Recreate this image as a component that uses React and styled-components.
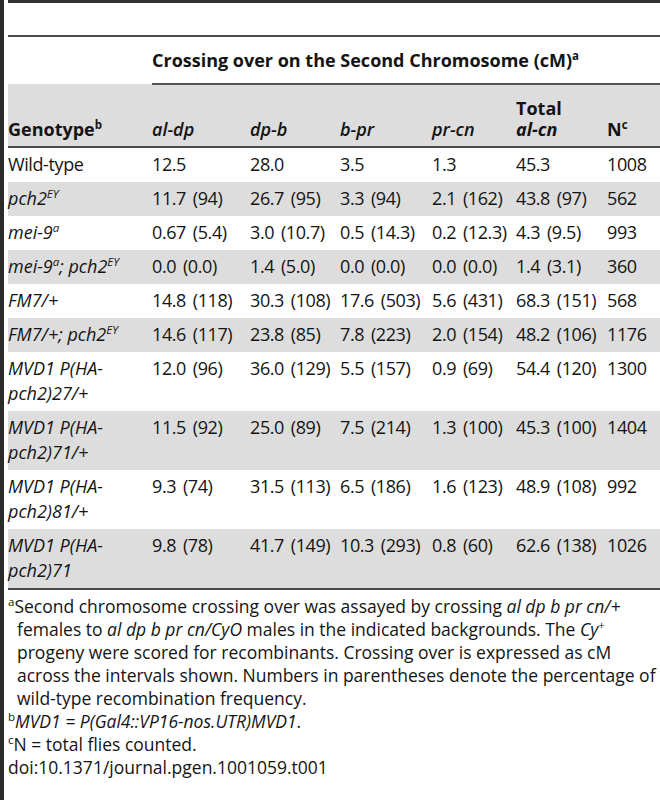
import React from "react";
import styled, { createGlobalStyle } from "styled-components";

const Global = createGlobalStyle`
  html, body { margin: 0; padding: 0; background: #fff; }
  body { font-family: "Open Sans", "Liberation Sans", sans-serif; color: #141414; }
`;

const Page = styled.div`
  width: 660px;
  height: 800px;
  box-sizing: border-box;
  border-left: 4px solid #2a2a2a;
  padding-left: 4px;
  overflow: hidden;
`;

const Frame = styled.div`
  border-top: 3px solid #333;
  padding-top: 32px;
`;

const Table = styled.table`
  width: 652px;
  table-layout: fixed;
  border-collapse: collapse;
  border-top: 2px solid #4a4a4a;
  border-bottom: 2px solid #4a4a4a;
  font-size: 18px;
`;

const SpanHead = styled.th`
  text-align: left;
  font-weight: 700;
  height: 46px;
  padding: 0;
  vertical-align: middle;
  border-bottom: 2px solid #555;
`;

const HeadRow = styled.tr`
  background: #dddddd;
  border-bottom: 2px solid #4a4a4a;
`;

const HeadCell = styled.th`
  text-align: left;
  vertical-align: bottom;
  padding: 0 0 6px 0;
  height: 55px;
  line-height: 21px;
  font-weight: ${(p) => (p.$italic ? 600 : 700)};
  font-style: ${(p) => (p.$italic ? "italic" : "normal")};
`;

const Row = styled.tr`
  background: ${(p) => (p.$shade ? "#dddddd" : "#fff")};
`;

const Cell = styled.td`
  padding: 4px 0 5px 0;
  line-height: 25px;
  vertical-align: top;
  white-space: nowrap;
  font-style: ${(p) => (p.$italic ? "italic" : "normal")};
  letter-spacing: ${(p) => (p.$italic ? "0" : "-0.4px")};
  word-spacing: ${(p) => (p.$italic ? "0" : "2.5px")};
`;

const Sup = styled.sup`
  font-size: 11.5px;
  line-height: 0;
  vertical-align: 7px;
  word-spacing: 0;
  letter-spacing: 0;
`;

const Notes = styled.div`
  padding-top: 5px;
  font-size: 17.5px;
  line-height: 23px;
  white-space: nowrap;
`;

const Note = styled.p`
  margin: 0;
  padding-left: ${(p) => p.$indent}px;
  text-indent: -${(p) => p.$indent}px;
`;

const I = styled.i`
  font-style: italic;
`;

const cols = [144, 98, 90, 92, 84, 91, 53];

const rows = [
  [<>Wild-type</>, false, "12.5", "28.0", "3.5", "1.3", "45.3", "1008"],
  [<>pch2<Sup>EY</Sup></>, true, "11.7 (94)", "26.7 (95)", "3.3 (94)", "2.1 (162)", "43.8 (97)", "562"],
  [<>mei-9<Sup>a</Sup></>, true, "0.67 (5.4)", "3.0 (10.7)", "0.5 (14.3)", "0.2 (12.3)", "4.3 (9.5)", "993"],
  [<>mei-9<Sup>a</Sup>; pch2<Sup>EY</Sup></>, true, "0.0 (0.0)", "1.4 (5.0)", "0.0 (0.0)", "0.0 (0.0)", "1.4 (3.1)", "360"],
  [<>FM7/+</>, true, "14.8 (118)", "30.3 (108)", "17.6 (503)", "5.6 (431)", "68.3 (151)", "568"],
  [<>FM7/+; pch2<Sup>EY</Sup></>, true, "14.6 (117)", "23.8 (85)", "7.8 (223)", "2.0 (154)", "48.2 (106)", "1176"],
  [<>MVD1 P(HA-<br />pch2)27/+</>, true, "12.0 (96)", "36.0 (129)", "5.5 (157)", "0.9 (69)", "54.4 (120)", "1300"],
  [<>MVD1 P(HA-<br />pch2)71/+</>, true, "11.5 (92)", "25.0 (89)", "7.5 (214)", "1.3 (100)", "45.3 (100)", "1404"],
  [<>MVD1 P(HA-<br />pch2)81/+</>, true, "9.3 (74)", "31.5 (113)", "6.5 (186)", "1.6 (123)", "48.9 (108)", "992"],
  [<>MVD1 P(HA-<br />pch2)71</>, true, "9.8 (78)", "41.7 (149)", "10.3 (293)", "0.8 (60)", "62.6 (138)", "1026"],
];

export default function App() {
  return (
    <>
      <Global />
      <Page>
        <Frame>
          <Table>
            <colgroup>
              {cols.map((w, i) => (
                <col key={i} style={{ width: w }} />
              ))}
            </colgroup>
            <thead>
              <tr>
                <th />
                <SpanHead colSpan={6}>
                  Crossing over on the Second Chromosome (cM)<Sup>a</Sup>
                </SpanHead>
              </tr>
              <HeadRow>
                <HeadCell>
                  Genotype<Sup>b</Sup>
                </HeadCell>
                <HeadCell $italic>al-dp</HeadCell>
                <HeadCell $italic>dp-b</HeadCell>
                <HeadCell $italic>b-pr</HeadCell>
                <HeadCell $italic>pr-cn</HeadCell>
                <HeadCell>
                  Total
                  <br />
                  <I>al-cn</I>
                </HeadCell>
                <HeadCell>
                  N<Sup>c</Sup>
                </HeadCell>
              </HeadRow>
            </thead>
            <tbody>
              {rows.map((r, i) => (
                <Row key={i} $shade={i % 2 === 1}>
                  <Cell $italic={r[1]}>{r[0]}</Cell>
                  {r.slice(2).map((v, j) => (
                    <Cell key={j}>{v}</Cell>
                  ))}
                </Row>
              ))}
            </tbody>
          </Table>
          <Notes>
            <Note $indent={9}>
              <Sup>a</Sup>Second chromosome crossing over was assayed by crossing{" "}
              <I>al dp b pr cn/+</I>
              <br />
              females to <I>al dp b pr cn/CyO</I> males in the indicated backgrounds. The{" "}
              <I>Cy</I>
              <Sup>+</Sup>
              <br />
              progeny were scored for recombinants. Crossing over is expressed as cM
              <br />
              across the intervals shown. Numbers in parentheses denote the percentage of
              <br />
              wild-type recombination frequency.
            </Note>
            <Note $indent={0}>
              <Sup>b</Sup>
              <I>MVD1 = P(Gal4::VP16-nos.UTR)MVD1</I>.
            </Note>
            <Note $indent={0}>
              <Sup>c</Sup>N = total flies counted.
            </Note>
            <Note $indent={0}>doi:10.1371/journal.pgen.1001059.t001</Note>
          </Notes>
        </Frame>
      </Page>
    </>
  );
}
